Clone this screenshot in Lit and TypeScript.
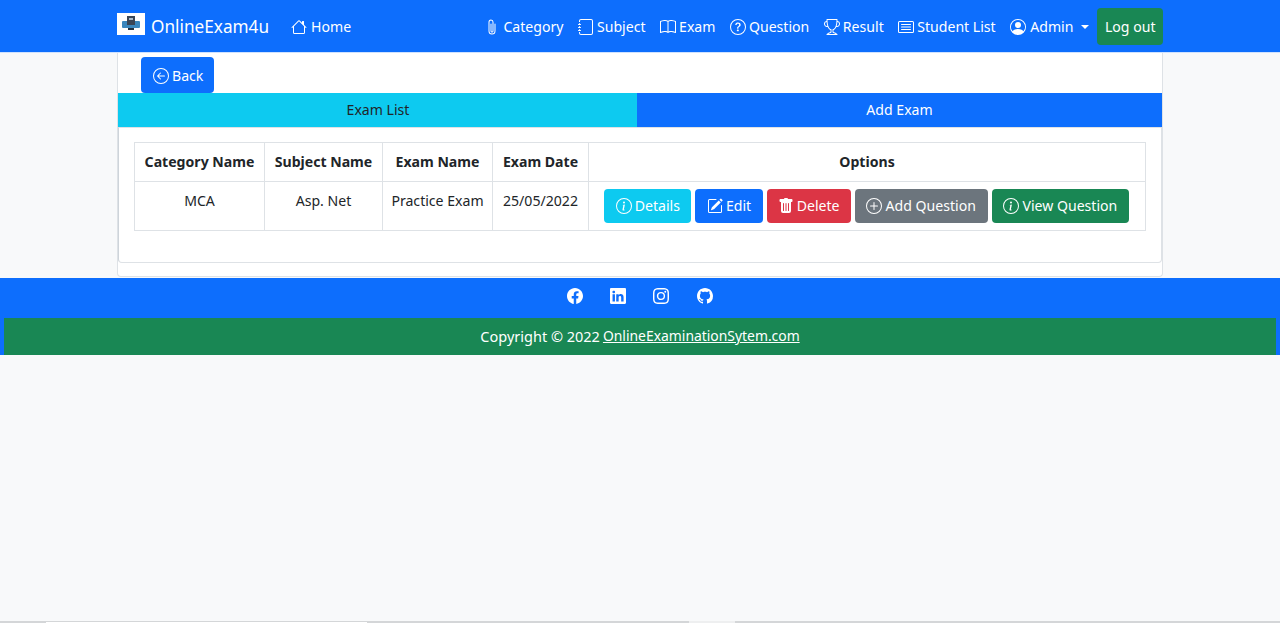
import { LitElement, css, html, svg } from 'lit';
import { customElement } from 'lit/decorators.js';

const CIRCLE = 'M8 15A7 7 0 1 1 8 1a7 7 0 0 1 0 14zm0 1A8 8 0 1 0 8 0a8 8 0 0 0 0 16z';

const ICONS: Record<string, string[]> = {
  house: ['M8.707 1.5a1 1 0 0 0-1.414 0L.646 8.146a.5.5 0 0 0 .708.708L2 8.207V13.5A1.5 1.5 0 0 0 3.5 15h9a1.5 1.5 0 0 0 1.5-1.5V8.207l.646.647a.5.5 0 0 0 .708-.708L13 5.793V2.5a.5.5 0 0 0-.5-.5h-1a.5.5 0 0 0-.5.5v1.293L8.707 1.5ZM13 7.207V13.5a.5.5 0 0 1-.5.5h-9a.5.5 0 0 1-.5-.5V7.207l5-5 5 5Z'],
  paperclip: ['M4.5 3a2.5 2.5 0 0 1 5 0v9a1.5 1.5 0 0 1-3 0V5a.5.5 0 0 1 1 0v7a.5.5 0 0 0 1 0V3a1.5 1.5 0 1 0-3 0v9a2.5 2.5 0 0 0 5 0V5a.5.5 0 0 1 1 0v7a3.5 3.5 0 1 1-7 0V3z'],
  journal: [
    'M3 0h10a2 2 0 0 1 2 2v12a2 2 0 0 1-2 2H3a2 2 0 0 1-2-2v-1h1v1a1 1 0 0 0 1 1h10a1 1 0 0 0 1-1V2a1 1 0 0 0-1-1H3a1 1 0 0 0-1 1v1H1V2a2 2 0 0 1 2-2z',
    'M1 5v-.5a.5.5 0 0 1 1 0V5h.5a.5.5 0 0 1 0 1h-2a.5.5 0 0 1 0-1H1zm0 3v-.5a.5.5 0 0 1 1 0V8h.5a.5.5 0 0 1 0 1h-2a.5.5 0 0 1 0-1H1zm0 3v-.5a.5.5 0 0 1 1 0V11h.5a.5.5 0 0 1 0 1h-2a.5.5 0 0 1 0-1H1z',
  ],
  book: ['M1 2.828c.885-.37 2.154-.769 3.388-.893 1.33-.134 2.458.063 3.112.752v9.746c-.935-.53-2.12-.603-3.213-.493-1.18.12-2.37.461-3.287.811V2.828zm7.5-.141c.654-.689 1.782-.886 3.112-.752 1.234.124 2.503.523 3.388.893v9.923c-.918-.35-2.107-.692-3.287-.81-1.094-.111-2.278-.039-3.213.492V2.687zM8 1.783C7.015.936 5.587.81 4.287.94c-1.514.153-3.042.672-3.994 1.105A.5.5 0 0 0 0 2.5v11a.5.5 0 0 0 .707.455c.882-.4 2.303-.881 3.68-1.02 1.409-.142 2.59.087 3.223.877a.5.5 0 0 0 .78 0c.633-.79 1.814-1.019 3.222-.877 1.378.139 2.8.62 3.681 1.02A.5.5 0 0 0 16 13.5v-11a.5.5 0 0 0-.293-.455c-.952-.433-2.48-.952-3.994-1.105C10.413.809 8.985.936 8 1.783z'],
  question: [CIRCLE, 'M5.255 5.786a.237.237 0 0 0 .241.247h.825c.138 0 .248-.113.266-.25.09-.656.54-1.134 1.342-1.134.686 0 1.314.343 1.314 1.168 0 .635-.374.927-.965 1.371-.673.489-1.206 1.06-1.168 1.987l.003.217a.25.25 0 0 0 .25.246h.811a.25.25 0 0 0 .25-.25v-.105c0-.718.273-.927 1.01-1.486.609-.463 1.244-.977 1.244-2.056 0-1.511-1.276-2.241-2.673-2.241-1.267 0-2.655.59-2.75 2.286zm1.557 5.763c0 .533.425.927 1.01.927.609 0 1.028-.394 1.028-.927 0-.552-.42-.94-1.029-.94-.584 0-1.009.388-1.009.94z'],
  trophy: ['M2.5.5A.5.5 0 0 1 3 0h10a.5.5 0 0 1 .5.5c0 .538-.012 1.05-.034 1.536a3 3 0 1 1-1.133 5.89c-.79 1.865-1.878 2.777-2.833 3.011v2.173l1.425.356c.194.048.377.135.537.255L13.3 15.1a.5.5 0 0 1-.3.9H3a.5.5 0 0 1-.3-.9l1.838-1.379c.16-.12.343-.207.537-.255L6.5 13.11v-2.173c-.955-.234-2.043-1.146-2.833-3.012a3 3 0 1 1-1.132-5.89A33.076 33.076 0 0 1 2.5.5zm.099 2.54a2 2 0 0 0 .72 3.935c-.333-1.05-.588-2.346-.72-3.935zm10.083 3.935a2 2 0 0 0 .72-3.935c-.133 1.59-.388 2.885-.72 3.935zM3.504 1c.007.517.026 1.006.056 1.469.13 2.028.457 3.546.87 4.667C5.294 9.48 6.484 10 7 10a.5.5 0 0 1 .5.5v2.61a1 1 0 0 1-.757.97l-1.426.356a.5.5 0 0 0-.179.085L4.5 15h7l-.638-.479a.501.501 0 0 0-.18-.085l-1.425-.356a1 1 0 0 1-.757-.97V10.5A.5.5 0 0 1 9 10c.516 0 1.706-.52 2.57-2.864.413-1.12.74-2.64.87-4.667.03-.463.049-.952.056-1.469H3.504z'],
  card: [
    'M14.5 3a.5.5 0 0 1 .5.5v9a.5.5 0 0 1-.5.5h-13a.5.5 0 0 1-.5-.5v-9a.5.5 0 0 1 .5-.5h13zm-13-1A1.5 1.5 0 0 0 0 3.5v9A1.5 1.5 0 0 0 1.5 14h13a1.5 1.5 0 0 0 1.5-1.5v-9A1.5 1.5 0 0 0 14.5 2h-13z',
    'M3 5.5a.5.5 0 0 1 .5-.5h9a.5.5 0 0 1 0 1h-9a.5.5 0 0 1-.5-.5zM3 8a.5.5 0 0 1 .5-.5h9a.5.5 0 0 1 0 1h-9A.5.5 0 0 1 3 8zm0 2.5a.5.5 0 0 1 .5-.5h9a.5.5 0 0 1 0 1h-9a.5.5 0 0 1-.5-.5z',
  ],
  person: ['M11 6a3 3 0 1 1-6 0 3 3 0 0 1 6 0z', 'M0 8a8 8 0 1 1 16 0A8 8 0 0 1 0 8zm8-7a7 7 0 0 0-5.468 11.37C3.242 11.226 4.805 10 8 10s4.757 1.225 5.468 2.37A7 7 0 0 0 8 1z'],
  back: ['M1 8a7 7 0 1 0 14 0A7 7 0 0 0 1 8zm15 0A8 8 0 1 1 0 8a8 8 0 0 1 16 0zm-4.5-.5a.5.5 0 0 1 0 1H5.707l2.147 2.146a.5.5 0 0 1-.708.708l-3-3a.5.5 0 0 1 0-.708l3-3a.5.5 0 1 1 .708.708L5.707 7.5H11.5z'],
  info: [CIRCLE, 'm8.93 6.588-2.29.287-.082.38.45.083c.294.07.352.176.288.469l-.738 3.468c-.194.897.105 1.319.808 1.319.545 0 1.178-.252 1.465-.598l.088-.416c-.2.176-.492.246-.686.246-.275 0-.375-.193-.304-.533L8.93 6.588zM9 4.5a1 1 0 1 1-2 0 1 1 0 0 1 2 0z'],
  edit: [
    'M15.502 1.94a.5.5 0 0 1 0 .706L14.459 3.69l-2-2L13.502.646a.5.5 0 0 1 .707 0l1.293 1.293zm-1.75 2.456-2-2L4.939 9.21a.5.5 0 0 0-.121.196l-.805 2.414a.25.25 0 0 0 .316.316l2.414-.805a.5.5 0 0 0 .196-.12l6.813-6.814z',
    'M1 13.5A1.5 1.5 0 0 0 2.5 15h11a1.5 1.5 0 0 0 1.5-1.5v-6a.5.5 0 0 0-1 0v6a.5.5 0 0 1-.5.5h-11a.5.5 0 0 1-.5-.5v-11a.5.5 0 0 1 .5-.5H9a.5.5 0 0 0 0-1H2.5A1.5 1.5 0 0 0 1 2.5v11z',
  ],
  trash: ['M2.5 1a1 1 0 0 0-1 1v1a1 1 0 0 0 1 1H3v9a2 2 0 0 0 2 2h6a2 2 0 0 0 2-2V4h.5a1 1 0 0 0 1-1V2a1 1 0 0 0-1-1H10a1 1 0 0 0-1-1H7a1 1 0 0 0-1 1H2.5zm3 4a.5.5 0 0 1 .5.5v7a.5.5 0 0 1-1 0v-7a.5.5 0 0 1 .5-.5zM8 5a.5.5 0 0 1 .5.5v7a.5.5 0 0 1-1 0v-7A.5.5 0 0 1 8 5zm3 .5v7a.5.5 0 0 1-1 0v-7a.5.5 0 0 1 1 0z'],
  plus: [CIRCLE, 'M8 4a.5.5 0 0 1 .5.5v3h3a.5.5 0 0 1 0 1h-3v3a.5.5 0 0 1-1 0v-3h-3a.5.5 0 0 1 0-1h3v-3A.5.5 0 0 1 8 4z'],
  facebook: ['M16 8.049c0-4.446-3.582-8.05-8-8.05C3.58 0-.002 3.603-.002 8.05c0 4.017 2.926 7.347 6.75 7.951v-5.625h-2.03V8.05H6.75V6.275c0-2.017 1.195-3.131 3.022-3.131.876 0 1.791.157 1.791.157v1.98h-1.009c-.993 0-1.303.621-1.303 1.258v1.51h2.218l-.354 2.326H9.25V16c3.824-.604 6.75-3.934 6.75-7.951z'],
  linkedin: ['M0 1.146C0 .513.526 0 1.175 0h13.65C15.474 0 16 .513 16 1.146v13.708c0 .633-.526 1.146-1.175 1.146H1.175C.526 16 0 15.487 0 14.854V1.146zm4.943 12.248V6.169H2.542v7.225h2.401zm-1.2-8.212c.837 0 1.358-.554 1.358-1.248-.015-.709-.52-1.248-1.342-1.248-.822 0-1.359.54-1.359 1.248 0 .694.521 1.248 1.327 1.248h.016zm4.908 8.212V9.359c0-.216.016-.432.08-.586.173-.431.568-.878 1.232-.878.869 0 1.216.662 1.216 1.634v3.865h2.401V9.25c0-2.22-1.184-3.252-2.764-3.252-1.274 0-1.845.7-2.165 1.193v.025h-.016a5.54 5.54 0 0 1 .016-.025V6.169h-2.4c.03.678 0 7.225 0 7.225h2.4z'],
  instagram: ['M8 0C5.829 0 5.556.01 4.703.048 3.85.088 3.269.222 2.76.42a3.917 3.917 0 0 0-1.417.923A3.927 3.927 0 0 0 .42 2.76C.222 3.268.087 3.85.048 4.7.01 5.555 0 5.827 0 8.001c0 2.172.01 2.444.048 3.297.04.852.174 1.433.372 1.942.205.526.478.972.923 1.417.444.445.89.719 1.416.923.51.198 1.09.333 1.942.372C5.555 15.99 5.827 16 8 16s2.444-.01 3.298-.048c.851-.04 1.434-.174 1.943-.372a3.916 3.916 0 0 0 1.416-.923c.445-.445.718-.891.923-1.417.197-.509.332-1.09.372-1.942C15.99 10.445 16 10.173 16 8s-.01-2.445-.048-3.299c-.04-.851-.175-1.433-.372-1.941a3.926 3.926 0 0 0-.923-1.417A3.911 3.911 0 0 0 13.24.42c-.51-.198-1.092-.333-1.943-.372C10.443.01 10.172 0 7.998 0h.003zm-.717 1.442h.718c2.136 0 2.389.007 3.232.046.78.035 1.204.166 1.486.275.373.145.64.319.92.599.28.28.453.546.598.92.11.281.24.705.275 1.485.039.843.047 1.096.047 3.231s-.008 2.389-.047 3.232c-.035.78-.166 1.203-.275 1.485a2.47 2.47 0 0 1-.599.919c-.28.28-.546.453-.92.598-.28.11-.704.24-1.485.276-.843.038-1.096.047-3.232.047s-2.39-.009-3.233-.047c-.78-.036-1.203-.166-1.485-.276a2.478 2.478 0 0 1-.92-.598 2.48 2.48 0 0 1-.6-.92c-.109-.281-.24-.705-.275-1.485-.038-.843-.046-1.096-.046-3.233 0-2.136.008-2.388.046-3.231.036-.78.166-1.204.276-1.486.145-.373.319-.64.599-.92.28-.28.546-.453.92-.598.282-.11.705-.24 1.485-.276.738-.034 1.024-.044 2.515-.045v.002zm4.988 1.328a.96.96 0 1 0 0 1.92.96.96 0 0 0 0-1.92zm-4.27 1.122a4.109 4.109 0 1 0 0 8.217 4.109 4.109 0 0 0 0-8.217zm0 1.441a2.667 2.667 0 1 1 0 5.334 2.667 2.667 0 0 1 0-5.334z'],
  github: ['M8 0C3.58 0 0 3.58 0 8c0 3.54 2.29 6.53 5.47 7.59.4.07.55-.17.55-.38 0-.19-.01-.82-.01-1.49-2.01.37-2.53-.49-2.69-.94-.09-.23-.48-.94-.82-1.13-.28-.15-.68-.52-.01-.53.63-.01 1.08.58 1.23.82.72 1.21 1.87.87 2.33.66.07-.52.28-.87.51-1.07-1.78-.2-3.64-.89-3.64-3.95 0-.87.31-1.59.82-2.15-.08-.2-.36-1.02.08-2.12 0 0 .67-.21 2.2.82.64-.18 1.32-.27 2-.27.68 0 1.36.09 2 .27 1.53-1.04 2.2-.82 2.2-.82.44 1.1.16 1.92.08 2.12.51.56.82 1.27.82 2.15 0 3.07-1.87 3.75-3.65 3.95.29.25.54.73.54 1.48 0 1.07-.01 1.93-.01 2.2 0 .21.15.46.55.38A8.012 8.012 0 0 0 16 8c0-4.42-3.58-8-8-8z'],
};

const icon = (name: string) => html`<svg class="bi" viewBox="0 0 16 16" fill="currentColor">
  ${ICONS[name].map((d) => svg`<path d=${d}></path>`)}
</svg>`;

const NAV_LINKS = [
  ['paperclip', 'Category'],
  ['journal', 'Subject'],
  ['book', 'Exam'],
  ['question', 'Question'],
  ['trophy', 'Result'],
  ['card', 'Student List'],
];

const ACTIONS = [
  ['info', 'Details', 'cyan'],
  ['edit', 'Edit', 'blue'],
  ['trash', 'Delete', 'red'],
  ['plus', 'Add Question', 'grey'],
  ['info', 'View Question', 'green'],
];

@customElement('app-root')
export class AppRoot extends LitElement {
  static styles = css`
    :host {
      display: flex;
      flex-direction: column;
      min-height: 623px;
      background: #f8f9fa;
      color: #212529;
      font-family: 'Noto Sans', 'Open Sans', sans-serif;
      font-size: 14.1px;
      line-height: 22px;
    }

    a {
      color: inherit;
      text-decoration: none;
    }

    .bi {
      width: 16px;
      height: 16px;
      flex: none;
    }

    .navbar {
      height: 53px;
      background: #0d6efd;
      color: #fff;
      display: flex;
      align-items: center;
      padding: 2px 117px 0;
      box-sizing: border-box;
      border-bottom: 1px solid #cfe2ff;
    }

    .brand {
      display: flex;
      align-items: center;
      gap: 6px;
      font-size: 17.2px;
      margin-right: 22px;
    }

    .logo {
      width: 28px;
      height: 22px;
      margin-bottom: 6px;
      background: #fff;
      display: block;
    }

    .nav-link {
      display: flex;
      align-items: center;
      gap: 3px;
      white-space: nowrap;
    }

    .home {
      gap: 4px;
    }

    .nav-right {
      margin-left: auto;
      display: flex;
      align-items: center;
      gap: 14.5px;
    }

    .caret {
      width: 0;
      height: 0;
      margin-left: 4px;
      border-top: 4px solid #fff;
      border-left: 4px solid transparent;
      border-right: 4px solid transparent;
    }

    .logout {
      background: #198754;
      border-radius: 4px;
      height: 37px;
      margin: 0 0 1px -6.5px;
      padding: 0 7.5px;
      display: flex;
      align-items: center;
    }

    .main {
      width: 1046px;
      height: 224px;
      box-sizing: border-box;
      margin: 0 auto 1px;
      background: #fff;
      border: 1px solid #dee2e6;
      border-top: none;
      border-radius: 0 0 4px 4px;
    }

    .btn {
      display: inline-flex;
      align-items: center;
      gap: 3px;
      height: 34px;
      box-sizing: border-box;
      padding: 0 11.5px;
      color: #fff;
      border-radius: 4px;
      white-space: nowrap;
    }

    .back-row {
      padding: 4px 0 0 23px;
      height: 40px;
      box-sizing: border-box;
    }

    .back {
      height: 36px;
      gap: 3px;
      padding: 1px 11px 0 12px;
    }

    .cyan { background: #0dcaf0; }
    .blue { background: #0d6efd; }
    .red { background: #dc3545; padding: 0 11px; }
    .grey { background: #6c757d; gap: 4px; padding: 0 12px 0 11px; }
    .green { background: #198754; }

    .tabs {
      display: flex;
      height: 34px;
      line-height: 33px;
      text-align: center;
    }

    .tab-list {
      width: 518px;
      padding-left: 1px;
      background: #0dcaf0;
      color: #212529;
    }

    .tab-add {
      flex: 1;
      background: #0d6efd;
      color: #fff;
    }

    .card {
      height: 136px;
      box-sizing: border-box;
      padding: 14px 15px;
      border: 1px solid #dee2e6;
      border-left-color: #ced4da;
      border-radius: 0 0 4px 4px;
    }

    table {
      width: 1011px;
      border-collapse: collapse;
      table-layout: fixed;
    }

    th,
    td {
      border: 1px solid #dee2e6;
      text-align: center;
      padding: 0;
      white-space: nowrap;
    }

    th {
      height: 38px;
      font-weight: 700;
    }

    td {
      height: 49px;
      vertical-align: top;
      padding-top: 8px;
      box-sizing: border-box;
    }

    td.options {
      padding-top: 7px;
    }

    .actions {
      display: flex;
      justify-content: center;
      gap: 4px;
      padding-right: 1px;
    }

    .social {
      height: 40px;
      box-sizing: border-box;
      padding: 2px 0.5px 0 0;
      background: #0d6efd;
      color: #fff;
      display: flex;
      justify-content: center;
      align-items: center;
      gap: 27.4px;
    }

    .copyright-band {
      background: #0d6efd;
      padding: 0 4px;
    }

    .copyright {
      height: 37px;
      box-sizing: border-box;
      padding-bottom: 1px;
      background: #198754;
      color: #fff;
      font-size: 14.5px;
      display: flex;
      justify-content: center;
      align-items: center;
      gap: 3px;
    }

    .copyright a {
      font-size: 13.9px;
      text-decoration: underline;
    }

    .taskbar {
      margin-top: auto;
      height: 2px;
      background: #d4d6d8;
      display: flex;
    }

    .taskbar .gap-a {
      width: 46px;
    }

    .taskbar .open {
      width: 321px;
      height: 1px;
      margin-top: 1px;
      background: #fff;
    }

    .taskbar .gap-b {
      width: 322px;
    }

    .taskbar .thumb {
      width: 46px;
      background: #eeeff0;
    }
  `;

  render() {
    return html`
      <nav class="navbar">
        <a class="brand">
          <svg class="logo" viewBox="0 0 28 22">
            <rect x="5" y="8" width="18" height="7" rx="1" fill="#3b87bd"></rect>
            <rect x="10" y="3" width="8" height="9" fill="#3a4656"></rect>
            <rect x="12" y="5" width="4" height="2" fill="#a9bccb"></rect>
            <rect x="11" y="15" width="6" height="2" fill="#22303e"></rect>
          </svg>
          OnlineExam4u
        </a>
        <a class="nav-link home">${icon('house')}Home</a>
        <div class="nav-right">
          ${NAV_LINKS.map(([name, label]) => html`<a class="nav-link">${icon(name)}${label}</a>`)}
          <a class="nav-link home">${icon('person')}Admin<span class="caret"></span></a>
          <a class="logout">Log out</a>
        </div>
      </nav>

      <section class="main">
        <div class="back-row">
          <a class="btn back blue">${icon('back')}Back</a>
        </div>
        <div class="tabs">
          <div class="tab-list">Exam List</div>
          <div class="tab-add">Add Exam</div>
        </div>
        <div class="card">
          <table>
            <colgroup>
              <col style="width:130px" />
              <col style="width:118px" />
              <col style="width:110px" />
              <col style="width:96px" />
              <col style="width:557px" />
            </colgroup>
            <thead>
              <tr>
                <th>Category Name</th>
                <th>Subject Name</th>
                <th>Exam Name</th>
                <th>Exam Date</th>
                <th>Options</th>
              </tr>
            </thead>
            <tbody>
              <tr>
                <td>MCA</td>
                <td>Asp. Net</td>
                <td>Practice Exam</td>
                <td>25/05/2022</td>
                <td class="options">
                  <div class="actions">
                    ${ACTIONS.map(
                      ([name, label, tone]) => html`<a class="btn ${tone}">${icon(name)}${label}</a>`,
                    )}
                  </div>
                </td>
              </tr>
            </tbody>
          </table>
        </div>
      </section>

      <footer>
        <div class="social">
          ${['facebook', 'linkedin', 'instagram', 'github'].map((name) => html`<a>${icon(name)}</a>`)}
        </div>
        <div class="copyright-band">
          <div class="copyright">Copyright © 2022 <a>OnlineExaminationSytem.com</a></div>
        </div>
      </footer>

      <div class="taskbar">
        <span class="gap-a"></span>
        <span class="open"></span>
        <span class="gap-b"></span>
        <span class="thumb"></span>
      </div>
    `;
  }
}

declare global {
  interface HTMLElementTagNameMap {
    'app-root': AppRoot;
  }
}
